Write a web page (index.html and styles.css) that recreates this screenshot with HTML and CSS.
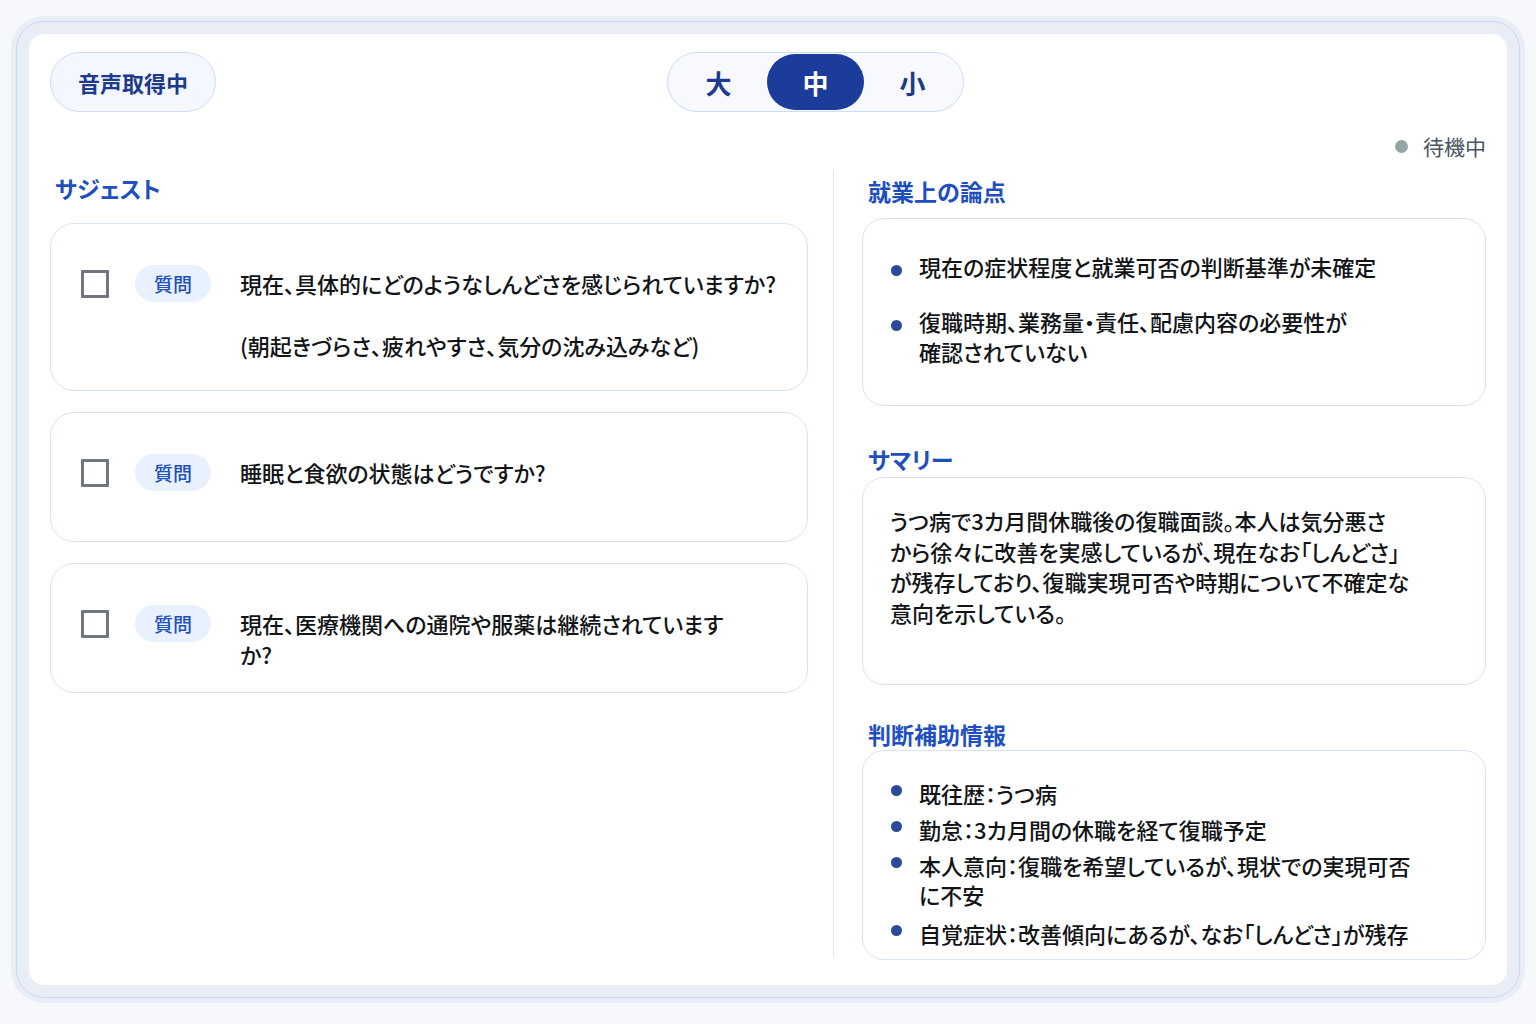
FILE: index.html
```html
<!DOCTYPE html>
<html lang="ja">
    <head>
        <meta charset="UTF-8" />
        <meta name="viewport" content="width=device-width, initial-scale=1.0" />
        <title>面談サポート</title>
        <link rel="stylesheet" href="styles.css">
    </head>
    <body>
        <div class="frame">
            <main class="panel">
                <header class="topbar">
                    <div class="rec-pill">音声取得中</div>
                    <div class="size-toggle">
                        <button class="seg">大</button>
                        <button class="seg active">中</button>
                        <button class="seg">小</button>
                    </div>
                </header>

                <div class="status">
                    <span class="status-dot"></span>
                    <span>待機中</span>
                </div>

                <div class="columns">
                    <section class="col-left">
                        <h2 class="sec-title">サジェスト</h2>
                        <div class="q-list">
                            <div class="q-card q-card--tall">
                                <span class="check"></span>
                                <span class="badge">質問</span>
                                <div class="q-text">
                                    <p>現在、具体的にどのようなしんどさを感じられていますか?</p>
                                    <p>(朝起きづらさ、疲れやすさ、気分の沈み込みなど)</p>
                                </div>
                            </div>
                            <div class="q-card">
                                <span class="check"></span>
                                <span class="badge">質問</span>
                                <div class="q-text">
                                    <p>睡眠と食欲の状態はどうですか?</p>
                                </div>
                            </div>
                            <div class="q-card">
                                <span class="check"></span>
                                <span class="badge">質問</span>
                                <div class="q-text">
                                    <p>現在、医療機関への通院や服薬は継続されています<br>か?</p>
                                </div>
                            </div>
                        </div>
                    </section>

                    <div class="divider"></div>

                    <section class="col-right">
                        <h2 class="sec-title sec-title--issues">就業上の論点</h2>
                        <div class="info-card issues">
                            <ul class="dots dots--wide">
                                <li>現在の症状程度と就業可否の判断基準が未確定</li>
                                <li>復職時期、業務量・責任、配慮内容の必要性が<br>確認されていない</li>
                            </ul>
                        </div>

                        <h2 class="sec-title sec-title--summary">サマリー</h2>
                        <div class="info-card summary">
                            <p>うつ病で3カ月間休職後の復職面談。本人は気分悪さ<br>から徐々に改善を実感しているが、現在なお「しんどさ」<br>が残存しており、復職実現可否や時期について不確定な<br>意向を示している。</p>
                        </div>

                        <h2 class="sec-title sec-title--aid">判断補助情報</h2>
                        <div class="info-card aid">
                            <ul class="dots dots--tight">
                                <li>既往歴：うつ病</li>
                                <li>勤怠：3カ月間の休職を経て復職予定</li>
                                <li>本人意向：復職を希望しているが、現状での実現可否<br>に不安</li>
                                <li class="last">自覚症状：改善傾向にあるが、なお「しんどさ」が残存</li>
                            </ul>
                        </div>
                    </section>
                </div>
            </main>
        </div>
    </body>
</html>
```

FILE: styles.css
```css
*,
*::before,
*::after {
    padding: 0;
    margin: 0;
    box-sizing: border-box;
}

body {
    background: #f6f8fc;
    height: 1024px;
    font-family: "Noto Sans CJK JP", "Noto Sans", "Liberation Sans", sans-serif;
    color: #121417;
}

.frame {
    margin: 21px 16px 0;
    height: 977px;
    border: 1px solid #c9d8f5;
    border-radius: 28px;
    background: #e9edf6;
    box-shadow: 0 0 0 5px #e9edf6;
    padding: 12px;
}

.panel {
    height: 100%;
    background: #fff;
    border-radius: 15px;
    padding: 18px 21px 28px;
    display: flex;
    flex-direction: column;
}

/* top bar */
.topbar {
    display: flex;
    align-items: center;
    height: 60px;

    & .rec-pill {
        height: 60px;
        display: flex;
        align-items: center;
        padding: 0 27px;
        border: 1px solid #cddcf9;
        border-radius: 30px;
        background: #f4f7ff;
        color: #1e3a8a;
        font-size: 22px;
        font-weight: 700;
    }

    & .size-toggle {
        margin-left: 451px;
        display: flex;
        height: 60px;
        padding: 1px 2px;
        border: 1px solid #cddcf9;
        border-radius: 30px;
        background: #f7f9ff;
    }
}

.seg {
    width: 97px;
    height: 56px;
    border: none;
    border-radius: 28px;
    background: none;
    font-family: inherit;
    font-size: 26px;
    font-weight: 700;
    color: #1e3a8a;

    &.active {
        background: #1b3c9b;
        color: #fff;
    }
}

.status {
    margin-top: 22px;
    display: flex;
    justify-content: flex-end;
    align-items: center;
    gap: 15px;
    line-height: 24px;
    font-size: 21px;
    color: #4a535e;

    & .status-dot {
        width: 13px;
        height: 13px;
        border-radius: 50%;
        background: #94a5a8;
    }
}

/* columns */
.columns {
    flex: 1;
    margin-top: 12px;
    display: flex;
    min-height: 0;
}

.col-left {
    flex: none;
    width: 758px;
}

.divider {
    flex: none;
    width: 1px;
    background: #e3e8f0;
    margin: 0 28px 0 25px;
}

.col-right {
    flex: 1;
    min-width: 0;
}

.sec-title {
    font-size: 23px;
    line-height: 26px;
    font-weight: 700;
    color: #1f4fbf;
    font-feature-settings: "palt";
    padding-left: 6px;
}

.col-left .sec-title {
    margin-top: 5px;
    padding-left: 5px;
}

.sec-title--issues {
    margin-top: 8px;
    margin-bottom: 14px;
}

.sec-title--summary {
    margin-top: 40px;
    margin-bottom: 5px;
}

.sec-title--aid {
    margin-top: 36px;
    margin-bottom: 3px;
}

/* suggestion cards */
.q-list {
    margin-top: 22px;
    display: flex;
    flex-direction: column;
    gap: 21px;
}

.q-card {
    display: flex;
    align-items: flex-start;
    min-height: 130px;
    padding: 41px 20px 21px 30px;
    border: 1px solid #d8e3f5;
    border-radius: 24px;
    background: #fff;

    & .check {
        flex: none;
        width: 28px;
        height: 28px;
        margin-top: 5px;
        border: 3px solid #72767f;
        border-radius: 1px;
    }

    & .badge {
        flex: none;
        margin-left: 26px;
        height: 37px;
        padding: 0 19px;
        display: flex;
        align-items: center;
        border-radius: 19px;
        background: #eaf1fe;
        color: #2150b8;
        font-size: 19px;
        font-weight: 500;
    }

    & .q-text {
        flex: 1;
        margin-left: 29px;
        margin-top: 3px;
        font-size: 22px;
        line-height: 31px;
        font-weight: 500;
        font-feature-settings: "palt";
        white-space: nowrap;

        & p + p {
            margin-top: 31px;
        }
    }

    &.q-card--tall {
        padding-bottom: 29px;
    }
}

/* right side cards */
.info-card {
    border: 1px solid #d8e3f5;
    border-radius: 22px;
    background: #fff;
    font-size: 22px;
    font-weight: 500;
    font-feature-settings: "palt";
    color: #121417;
    white-space: nowrap;

    &.issues {
        min-height: 188px;
        padding: 32px 28px;
    }

    &.summary {
        min-height: 208px;
        padding: 27px 27px;
        line-height: 30.5px;
    }

    &.aid {
        min-height: 210px;
        padding: 28px 28px 10px;
    }
}

.dots {
    list-style: none;
    display: flex;
    flex-direction: column;

    & li {
        position: relative;
        padding-left: 28px;
    }

    & li::before {
        content: "";
        position: absolute;
        left: 0;
        width: 11px;
        height: 11px;
        border-radius: 50%;
        background: #2b4a98;
    }

    &.dots--wide {
        gap: 25px;
        line-height: 30px;

        & li::before {
            top: 14px;
        }
    }

    &.dots--tight {
        gap: 7px;
        line-height: 29px;

        & li::before {
            top: 6px;
        }

        & li.last {
            margin-top: 3px;
        }
    }
}
```
